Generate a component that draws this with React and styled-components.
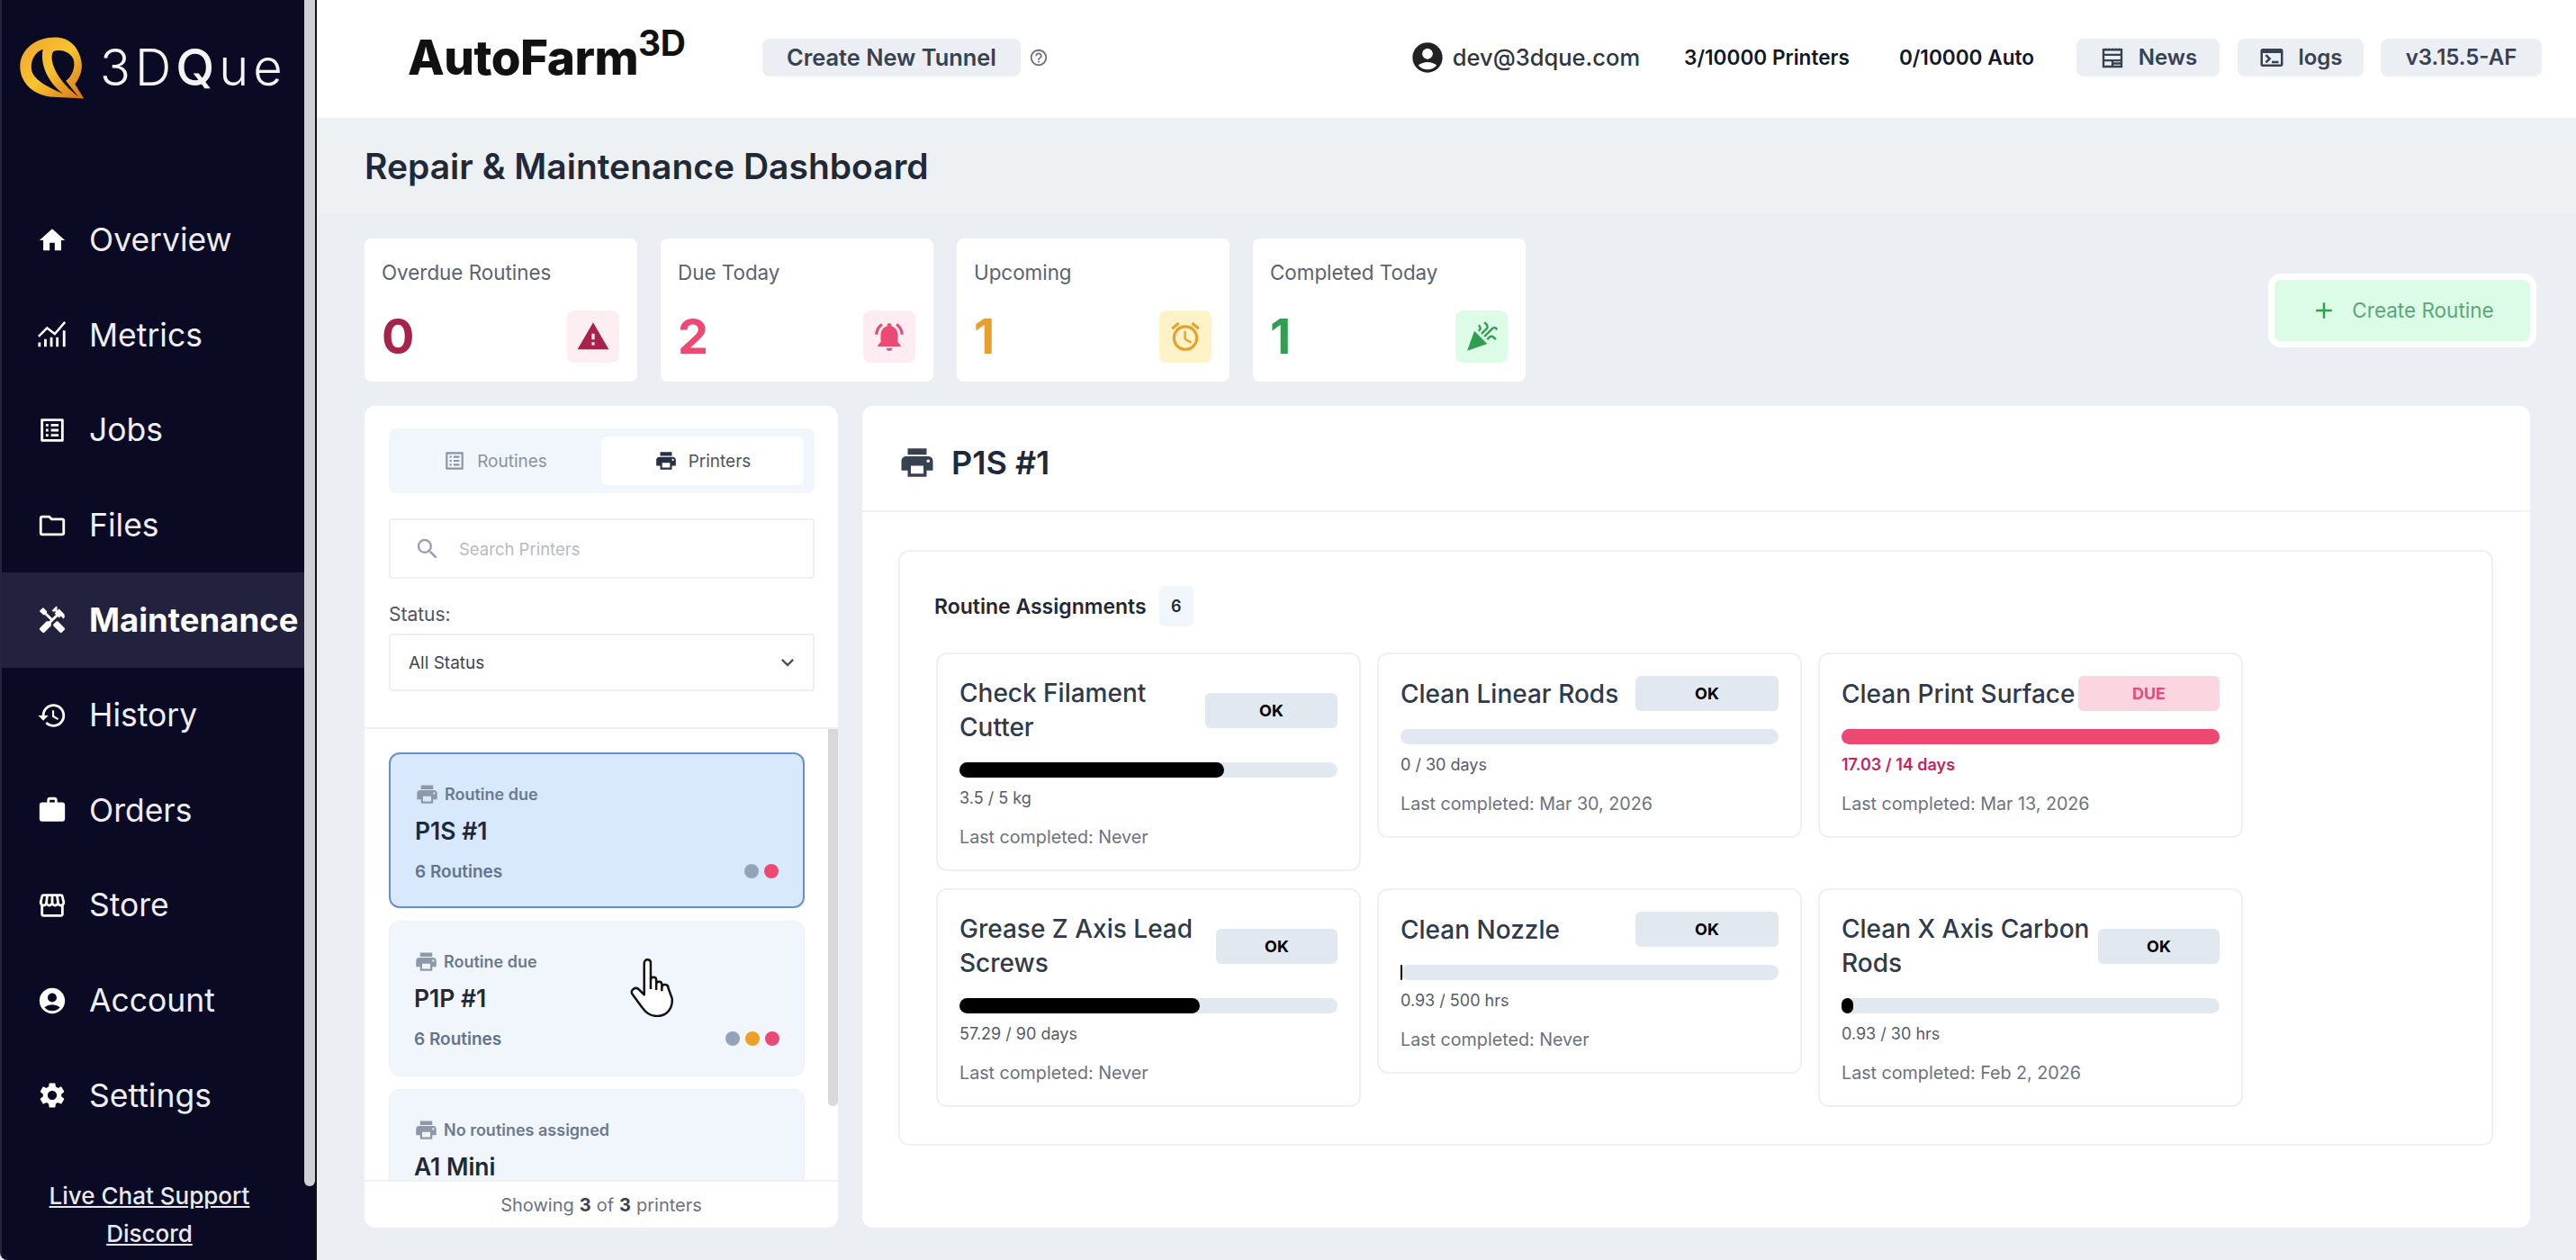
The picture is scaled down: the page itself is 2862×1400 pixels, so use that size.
import React from "react";
import styled, { createGlobalStyle } from "styled-components";
import {
  MdHome,
  MdOutlineListAlt,
  MdOutlineFolder,
  MdHandyman,
  MdHistory,
  MdWork,
  MdOutlineStorefront,
  MdAccountCircle,
  MdSettings,
  MdHelpOutline,
  MdOutlineTerminal,
  MdWarning,
  MdNotificationsActive,
  MdOutlineAlarm,
  MdCelebration,
  MdAdd,
  MdPrint,
  MdSearch,
  MdExpandMore,
} from "react-icons/md";

const GlobalStyle = createGlobalStyle`
  html, body {
    margin: 0;
    padding: 0;
    height: 100%;
    overflow: hidden;
    background: #ebeef2;
  }
  body, button {
    font-family: Inter, "Liberation Sans", sans-serif;
  }
  * { box-sizing: border-box; }
`;

const MetricsIcon = () => (
  <svg width="36" height="32" viewBox="0 0 36 32" fill="none" stroke="currentColor">
    <path d="M2 18L12 8l9 7L33 1" strokeWidth="2.6" />
    <path d="M3 30v-5M10 30v-9M17 30v-11M24 30v-11M32 30V11" strokeWidth="3" />
  </svg>
);

const NewsIcon = () => (
  <svg width="30" height="30" viewBox="0 0 24 24" fill="none" stroke="currentColor" strokeWidth="1.9">
    <path d="M4 5h16v15H4z" />
    <path d="M4 9.5h16M4 14.5h16M12 14.5V20M12 17.2h8" />
    <path d="M6 3.5v1.5M9 3.5v1.5M12 3.5v1.5M15 3.5v1.5M18 3.5v1.5" strokeWidth="1" />
  </svg>
);

const LogoMark = () => (
  <svg width="76" height="74" viewBox="20 10 245 240">
    <defs>
      <linearGradient id="logoFill" x1="0" y1="0" x2="1" y2="1">
        <stop offset="0" stopColor="#f2a22c" />
        <stop offset="0.5" stopColor="#f7c431" />
        <stop offset="1" stopColor="#d9711a" />
      </linearGradient>
    </defs>
    <path
      fill="url(#logoFill)"
      fillRule="evenodd"
      d="M170 22C100 15 35 55 30 120C27 185 80 232 150 236L260 242L228 190C250 160 258 130 248 95C235 50 205 26 170 22Z
         M112 64C80 75 62 115 75 150C90 180 130 200 185 225C140 190 100 130 112 64Z
         M150 72C135 95 150 150 205 205L240 235L195 178C215 165 232 130 222 100C210 72 175 62 150 72Z"
    />
  </svg>
);

const HandCursor = () => (
  <svg width="50" height="66" viewBox="0 0 48 64" fill="#fff" stroke="#111" strokeWidth="2.4" strokeLinejoin="round">
    <path d="M15 6C15 1 22 1 22 6L22 24C22 20 28 20 28 24L28 29C28 25 34 25 34 29L34 32C34 28 41 28 41 33L45 44C46 54 40 63 29 63C22 63 17 60 13 54L2 39C0 35 5 31 9 34L15 40Z" />
    <path d="M22 24V34M28 29V35M34 32V36" fill="none" />
  </svg>
);

const navItems = [
  { label: "Overview", icon: <MdHome /> },
  { label: "Metrics", icon: <MetricsIcon /> },
  { label: "Jobs", icon: <MdOutlineListAlt /> },
  { label: "Files", icon: <MdOutlineFolder /> },
  { label: "Maintenance", icon: <MdHandyman />, active: true },
  { label: "History", icon: <MdHistory /> },
  { label: "Orders", icon: <MdWork /> },
  { label: "Store", icon: <MdOutlineStorefront /> },
  { label: "Account", icon: <MdAccountCircle /> },
  { label: "Settings", icon: <MdSettings /> },
];

const stats = [
  { label: "Overdue Routines", value: 0, color: "#a8234a", bg: "#fdeef2", icon: <MdWarning /> },
  { label: "Due Today", value: 2, color: "#ec4a74", bg: "#fdecf1", icon: <MdNotificationsActive /> },
  { label: "Upcoming", value: 1, color: "#e8a02c", bg: "#fef3c7", icon: <MdOutlineAlarm /> },
  { label: "Completed Today", value: 1, color: "#2f9e4f", bg: "#dcfce7", icon: <MdCelebration /> },
];

const printers = [
  { status: "Routine due", name: "P1S #1", routines: "6 Routines", dots: ["#94a3b8", "#ec4a74"], active: true },
  { status: "Routine due", name: "P1P #1", routines: "6 Routines", dots: ["#94a3b8", "#ee9f27", "#ec4a74"] },
  { status: "No routines assigned", name: "A1 Mini" },
];

const routines = [
  { title: "Check Filament Cutter", badge: "OK", badgeWidth: 147, pct: 70, value: "3.5 / 5 kg", last: "Never" },
  { title: "Clean Linear Rods", badge: "OK", badgeWidth: 159, pct: 0, value: "0 / 30 days", last: "Mar 30, 2026" },
  { title: "Clean Print Surface", badge: "DUE", badgeWidth: 157, pct: 100, value: "17.03 / 14 days", last: "Mar 13, 2026", due: true },
  { title: "Grease Z Axis Lead Screws", badge: "OK", badgeWidth: 135, pct: 63.6, value: "57.29 / 90 days", last: "Never" },
  { title: "Clean Nozzle", badge: "OK", badgeWidth: 159, pct: 0.5, value: "0.93 / 500 hrs", last: "Never" },
  { title: "Clean X Axis Carbon Rods", badge: "OK", badgeWidth: 135, pct: 3.1, value: "0.93 / 30 hrs", last: "Feb 2, 2026" },
];

export default function App() {
  return (
    <Page>
      <GlobalStyle />
      <Sidebar>
        <SidebarBody>
          <Logo>
            <LogoMark />
            <LogoText>
              3D<b>Q</b>ue
            </LogoText>
          </Logo>
          <Nav>
            {navItems.map((item) => (
              <NavRow key={item.label} $active={item.active}>
                <NavIcon>{item.icon}</NavIcon>
                {item.label}
              </NavRow>
            ))}
          </Nav>
          <SideFooter>
            <SideLink>Live Chat Support</SideLink>
            <SideLink>Discord</SideLink>
          </SideFooter>
        </SidebarBody>
        <SideTrack>
          <SideThumb />
        </SideTrack>
      </Sidebar>

      <Main>
        <Header>
          <Brand>
            AutoFarm<sup>3D</sup>
          </Brand>
          <TunnelButton>Create New Tunnel</TunnelButton>
          <HelpIcon>
            <MdHelpOutline />
          </HelpIcon>
          <HeaderRight>
            <UserBox>
              <MdAccountCircle />
              dev@3dque.com
            </UserBox>
            <Quota $left={49}>3/10000 Printers</Quota>
            <Quota $left={55}>0/10000 Auto</Quota>
            <HeaderButton $left={47} $width={159}>
              <NewsIcon />
              News
            </HeaderButton>
            <HeaderButton $left={20} $width={140}>
              <MdOutlineTerminal />
              logs
            </HeaderButton>
            <HeaderButton $left={19} $width={179}>
              v3.15.5-AF
            </HeaderButton>
          </HeaderRight>
        </Header>

        <TitleBand>Repair &amp; Maintenance Dashboard</TitleBand>

        <Content>
          <StatRow>
            {stats.map((s) => (
              <StatCard key={s.label}>
                <StatLabel>{s.label}</StatLabel>
                <StatBottom>
                  <StatValue $color={s.color}>{s.value}</StatValue>
                  <StatIcon $color={s.color} $bg={s.bg}>
                    {s.icon}
                  </StatIcon>
                </StatBottom>
              </StatCard>
            ))}
            <CreateButton>
              <MdAdd />
              Create Routine
            </CreateButton>
          </StatRow>

          <Panels>
            <LeftPanel>
              <Filters>
                <Tabs>
                  <Tab>
                    <MdOutlineListAlt />
                    Routines
                  </Tab>
                  <Tab $active>
                    <MdPrint />
                    Printers
                  </Tab>
                </Tabs>
                <SearchBox>
                  <MdSearch />
                  Search Printers
                </SearchBox>
                <StatusLabel>Status:</StatusLabel>
                <SelectBox>
                  All Status
                  <MdExpandMore />
                </SelectBox>
              </Filters>

              <ListArea>
                <PrinterList>
                  {printers.map((p) => (
                    <PrinterCard key={p.name} $active={p.active}>
                      <PrinterStatus>
                        <MdPrint />
                        {p.status}
                      </PrinterStatus>
                      <PrinterName>{p.name}</PrinterName>
                      {p.routines && (
                        <PrinterMeta>
                          {p.routines}
                          <Dots>
                            {p.dots.map((c, i) => (
                              <Dot key={i} $color={c} />
                            ))}
                          </Dots>
                        </PrinterMeta>
                      )}
                    </PrinterCard>
                  ))}
                </PrinterList>
                <ListTrack />
                <CursorSpot>
                  <HandCursor />
                </CursorSpot>
              </ListArea>

              <ListFooter>
                Showing <b>3</b> of <b>3</b> printers
              </ListFooter>
            </LeftPanel>

            <RightPanel>
              <PanelHeader>
                <MdPrint />
                P1S #1
              </PanelHeader>
              <PanelBody>
                <AssignBox>
                  <AssignTitle>
                    Routine Assignments
                    <CountBadge>6</CountBadge>
                  </AssignTitle>
                  <RoutineGrid>
                    {routines.map((r) => (
                      <RoutineCard key={r.title}>
                        <RoutineHead>
                          <RoutineTitle>{r.title}</RoutineTitle>
                          <StateBadge $due={r.due} $width={r.badgeWidth}>
                            {r.badge}
                          </StateBadge>
                        </RoutineHead>
                        <Bar>
                          <BarFill $due={r.due} style={{ width: `${r.pct}%` }} />
                        </Bar>
                        <RoutineValue $due={r.due}>{r.value}</RoutineValue>
                        <RoutineLast>Last completed: {r.last}</RoutineLast>
                      </RoutineCard>
                    ))}
                  </RoutineGrid>
                </AssignBox>
              </PanelBody>
            </RightPanel>
          </Panels>
        </Content>
      </Main>
    </Page>
  );
}

const Page = styled.div`
  display: flex;
  width: 100vw;
  height: 100vh;
  overflow: hidden;
`;

const Sidebar = styled.aside`
  display: flex;
  width: 352px;
  flex-shrink: 0;
  background: #0a0a24;
  border-left: 2px solid #24243c;
  border-right: 2px solid #111;
  border-bottom-left-radius: 8px;
`;

const SidebarBody = styled.div`
  width: 336px;
  display: flex;
  flex-direction: column;
`;

const SideTrack = styled.div`
  width: 12px;
`;

const SideThumb = styled.div`
  height: 1318px;
  background: #cfd1d4;
  border-radius: 0 0 6px 6px;
`;

const Logo = styled.div`
  display: flex;
  align-items: center;
  height: 214px;
  padding: 38px 0 102px 17px;
  gap: 16px;
`;

const LogoText = styled.div`
  font-size: 56px;
  font-weight: 300;
  letter-spacing: 5px;
  color: #f4f4f6;
  line-height: 1;

  b {
    font-weight: 500;
  }
`;

const Nav = styled.nav`
  display: flex;
  flex-direction: column;
`;

const NavRow = styled.div`
  display: flex;
  align-items: center;
  height: 105.6px;
  padding-left: 39px;
  font-size: ${(p) => (p.$active ? 36.5 : 35.5)}px;
  font-weight: ${(p) => (p.$active ? 700 : 400)};
  color: ${(p) => (p.$active ? "#fff" : "#eeeef2")};
  background: ${(p) => (p.$active ? "#22223f" : "transparent")};
  white-space: nowrap;
`;

const NavIcon = styled.span`
  display: flex;
  align-items: center;
  justify-content: center;
  width: 34px;
  margin-right: 24px;
  font-size: 44px;
  flex-shrink: 0;
  color: #fff;
`;

const SideFooter = styled.div`
  display: flex;
  flex-direction: column;
  align-items: center;
  padding: 38px 8px 0 0;
`;

const SideLink = styled.a`
  font-size: 26px;
  font-weight: 500;
  line-height: 42px;
  color: #e8e8f0;
  text-decoration: underline;
`;

const Main = styled.div`
  flex: 1;
  min-width: 0;
  display: flex;
  flex-direction: column;
`;

const Header = styled.header`
  display: flex;
  align-items: center;
  height: 131px;
  flex-shrink: 0;
  padding: 0 38px 4px 101px;
  background: #fff;
`;

const Brand = styled.div`
  width: 394px;
  flex-shrink: 0;
  font-size: 53px;
  font-weight: 800;
  color: #111;
  letter-spacing: -0.5px;
  white-space: nowrap;

  sup {
    font-size: 39px;
    line-height: 0;
    vertical-align: 21px;
    font-weight: 700;
  }
`;

const TunnelButton = styled.button`
  width: 287px;
  height: 42px;
  border: none;
  border-radius: 8px;
  background: #ebeef2;
  color: #374151;
  font-size: 25.4px;
  font-weight: 600;
  white-space: nowrap;
`;

const HelpIcon = styled.span`
  display: flex;
  margin-left: 9px;
  font-size: 22px;
  color: #6b7280;
`;

const HeaderRight = styled.div`
  display: flex;
  align-items: center;
  margin-left: auto;
`;

const UserBox = styled.div`
  display: flex;
  align-items: center;
  gap: 8px;
  font-size: 25.5px;
  font-weight: 500;
  color: #2f3642;
  white-space: nowrap;

  svg {
    font-size: 40px;
    color: #222;
  }
`;

const Quota = styled.div`
  margin-left: ${(p) => p.$left}px;
  font-size: 22.6px;
  font-weight: 600;
  color: #111827;
  white-space: nowrap;
`;

const HeaderButton = styled.button`
  display: flex;
  align-items: center;
  justify-content: center;
  gap: 14px;
  margin-left: ${(p) => p.$left}px;
  width: ${(p) => p.$width}px;
  height: 42px;
  border: none;
  border-radius: 8px;
  background: #ebeef2;
  color: #374151;
  font-size: 24px;
  font-weight: 600;

  svg {
    font-size: 30px;
    flex-shrink: 0;
  }
`;

const TitleBand = styled.div`
  display: flex;
  align-items: center;
  height: 106px;
  flex-shrink: 0;
  padding: 0 0 0 53px;
  background: #eef1f4;
  font-size: 39px;
  font-weight: 600;
  color: #1f2937;
`;

const Content = styled.div`
  flex: 1;
  min-height: 0;
  display: flex;
  flex-direction: column;
  gap: 27px;
  padding: 28px 51px 36px 53px;
`;

const StatRow = styled.div`
  display: flex;
  align-items: center;
  gap: 26px;
`;

const StatCard = styled.div`
  width: 303px;
  height: 159px;
  padding: 25px 20px 0 19px;
  background: #fff;
  border-radius: 8px;
`;

const StatLabel = styled.div`
  font-size: 22.4px;
  line-height: 26px;
  color: #5b6270;
`;

const StatBottom = styled.div`
  display: flex;
  align-items: center;
  justify-content: space-between;
  margin-top: 29px;
`;

const StatValue = styled.div`
  font-size: 54px;
  font-weight: 700;
  line-height: 1;
  color: ${(p) => p.$color};
`;

const StatIcon = styled.div`
  display: flex;
  align-items: center;
  justify-content: center;
  width: 58px;
  height: 58px;
  border-radius: 8px;
  font-size: 38px;
  color: ${(p) => p.$color};
  background: ${(p) => p.$bg};
`;

const CreateButton = styled.button`
  display: flex;
  align-items: center;
  justify-content: center;
  gap: 16px;
  margin-left: auto;
  margin-right: -7px;
  width: 298px;
  height: 82px;
  border: 7px solid #fff;
  border-radius: 14px;
  background: #dcfce7;
  color: #5aa878;
  font-size: 22.5px;
  font-weight: 400;

  svg {
    font-size: 30px;
    color: #2f9e4f;
  }
`;

const Panels = styled.div`
  flex: 1;
  min-height: 0;
  display: flex;
  gap: 27px;
`;

const LeftPanel = styled.section`
  width: 526px;
  flex-shrink: 0;
  display: flex;
  flex-direction: column;
  background: #fff;
  border-radius: 12px;
  overflow: hidden;
`;

const Filters = styled.div`
  height: 359px;
  flex-shrink: 0;
  padding: 25px 26px 0 27px;
  border-bottom: 2px solid #eef0f3;
`;

const Tabs = styled.div`
  display: flex;
  align-items: center;
  height: 72px;
  padding: 0 12px 0 0;
  background: #f1f6fc;
  border-radius: 8px;
`;

const Tab = styled.div`
  flex: ${(p) => (p.$active ? "0 0 225px" : "1")};
  display: flex;
  align-items: center;
  justify-content: center;
  gap: 12px;
  height: 54px;
  border-radius: 8px;
  font-size: 19px;
  color: ${(p) => (p.$active ? "#4b5563" : "#8a93a2")};
  background: ${(p) => (p.$active ? "#fff" : "transparent")};

  svg {
    font-size: 26px;
    color: ${(p) => (p.$active ? "#273142" : "#8a93a2")};
  }
`;

const SearchBox = styled.div`
  display: flex;
  align-items: center;
  gap: 20px;
  height: 67px;
  margin-top: 28px;
  padding-left: 26px;
  border: 2px solid #eef0f3;
  border-radius: 3px;
  font-size: 18.5px;
  color: #b5bac4;

  svg {
    font-size: 30px;
    color: #9aa1ad;
  }
`;

const StatusLabel = styled.div`
  height: 30px;
  margin-top: 25px;
  font-size: 21px;
  line-height: 30px;
  color: #4b5563;
`;

const SelectBox = styled.div`
  display: flex;
  align-items: center;
  justify-content: space-between;
  height: 64px;
  margin-top: 6px;
  padding: 0 14px 0 20px;
  border: 2px solid #eef0f3;
  border-radius: 3px;
  font-size: 19px;
  color: #3f4652;

  svg {
    font-size: 28px;
    color: #4b5563;
  }
`;

const ListArea = styled.div`
  position: relative;
  flex: 1;
  min-height: 0;
  display: flex;
  overflow: hidden;
`;

const PrinterList = styled.div`
  flex: 1;
  display: flex;
  flex-direction: column;
  gap: 14px;
  padding: 26px 26px 0 27px;
`;

const ListTrack = styled.div`
  width: 11px;
  height: 419px;
  flex-shrink: 0;
  background: #d9d9d9;
  border-radius: 0 0 6px 6px;
`;

const CursorSpot = styled.div`
  position: absolute;
  left: 295px;
  top: 254px;
  display: flex;
`;

const PrinterCard = styled.div`
  flex-shrink: 0;
  height: 173px;
  padding: 32px 27px 0;
  border-radius: 12px;
  border: ${(p) => (p.$active ? "2px solid #6a8fc8" : "1px solid #edf1f6")};
  background: ${(p) => (p.$active ? "#d8e8fd" : "#f1f6fc")};
`;

const PrinterStatus = styled.div`
  display: flex;
  align-items: center;
  gap: 6px;
  height: 24px;
  font-size: 18px;
  font-weight: 600;
  color: #6b7a8f;

  svg {
    font-size: 27px;
    color: #8d99aa;
    flex-shrink: 0;
  }
`;

const PrinterName = styled.div`
  height: 28px;
  margin-top: 15px;
  font-size: 26.5px;
  font-weight: 600;
  line-height: 28px;
  color: #1f2937;
`;

const PrinterMeta = styled.div`
  display: flex;
  align-items: center;
  justify-content: space-between;
  height: 24px;
  margin-top: 19px;
  font-size: 19px;
  font-weight: 600;
  color: #64748b;
`;

const Dots = styled.div`
  display: flex;
  gap: 6px;
`;

const Dot = styled.span`
  width: 16px;
  height: 16px;
  border-radius: 50%;
  background: ${(p) => p.$color};
`;

const ListFooter = styled.div`
  display: flex;
  align-items: center;
  justify-content: center;
  gap: 6px;
  height: 53px;
  flex-shrink: 0;
  border-top: 2px solid #eef0f3;
  font-size: 20px;
  color: #6b7280;

  b {
    font-weight: 700;
    color: #374151;
  }
`;

const RightPanel = styled.section`
  flex: 1;
  min-width: 0;
  background: #fff;
  border-radius: 12px;
  overflow: hidden;
`;

const PanelHeader = styled.div`
  display: flex;
  align-items: center;
  gap: 17px;
  height: 118px;
  padding: 10px 0 0 40px;
  border-bottom: 2px solid #eef0f3;
  font-size: 36px;
  font-weight: 600;
  color: #1f2937;

  svg {
    font-size: 42px;
    color: #374151;
  }
`;

const PanelBody = styled.div`
  padding: 42px 41px 0 40px;
`;

const AssignBox = styled.div`
  height: 662px;
  padding: 38px 38px 0;
  border: 2px solid #eef0f3;
  border-radius: 12px;
`;

const AssignTitle = styled.div`
  display: flex;
  align-items: center;
  gap: 14px;
  height: 45px;
  font-size: 23px;
  font-weight: 600;
  color: #1f2937;
`;

const CountBadge = styled.span`
  display: flex;
  align-items: center;
  justify-content: center;
  width: 38px;
  height: 45px;
  border-radius: 6px;
  background: #f1f6fc;
  font-size: 18px;
  font-weight: 600;
`;

const RoutineGrid = styled.div`
  display: grid;
  grid-template-columns: repeat(3, 472px);
  gap: 19px 18px;
  align-items: start;
  margin: 29px 0 0 2px;
`;

const RoutineCard = styled.div`
  padding: 24px 24px 25px;
  border: 2px solid #eef0f3;
  border-radius: 12px;
`;

const RoutineHead = styled.div`
  display: flex;
  align-items: center;
  justify-content: space-between;
  gap: 2px;
`;

const RoutineTitle = styled.div`
  flex: 1;
  font-size: 28px;
  font-weight: 500;
  line-height: 38px;
  color: #2f3a4a;
`;

const StateBadge = styled.span`
  display: flex;
  align-items: center;
  justify-content: center;
  flex-shrink: 0;
  width: ${(p) => p.$width}px;
  height: 39px;
  border-radius: 6px;
  font-size: 18px;
  font-weight: 700;
  color: ${(p) => (p.$due ? "#e94a78" : "#000")};
  background: ${(p) => (p.$due ? "#fbd5e0" : "#e2e8f0")};
`;

const Bar = styled.div`
  height: 17px;
  margin-top: 20px;
  border-radius: 9px;
  background: #e2e8f0;
`;

const BarFill = styled.div`
  height: 100%;
  min-width: 2px;
  border-radius: 9px;
  background: ${(p) => (p.$due ? "#ec4870" : "#000")};

  &[style*="width: 0%"] {
    display: none;
  }
`;

const RoutineValue = styled.div`
  margin-top: 12px;
  font-size: 18px;
  line-height: 22px;
  font-weight: ${(p) => (p.$due ? 600 : 400)};
  color: ${(p) => (p.$due ? "#c2255c" : "#555c68")};
`;

const RoutineLast = styled.div`
  margin-top: 21px;
  font-size: 19.7px;
  line-height: 22px;
  color: #6b7280;
`;
